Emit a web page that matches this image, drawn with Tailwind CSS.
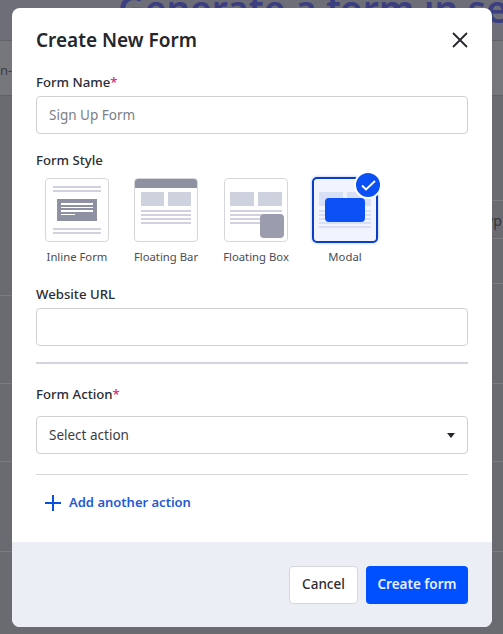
<!DOCTYPE html>
<html lang="en">
<head>
<meta charset="UTF-8">
<title>Create New Form</title>
<script src="https://cdn.jsdelivr.net/npm/@tailwindcss/browser@4"></script>
</head>
<body class="font-['Noto_Sans','Liberation_Sans',sans-serif] text-[#2b2d33]">
<div class="relative w-[503px] h-[634px] overflow-hidden bg-[#6a6b70]">
  <!-- page behind the overlay -->
  <div class="absolute left-0 top-0 w-full h-[40px] bg-[#6e6e78]"></div>
  <div class="absolute left-0 top-[41px] w-full h-[54px] bg-[#76777b]"></div>
  <div class="absolute left-[118px] top-[-19px] whitespace-nowrap text-[37px] font-semibold text-[#3b3e80]">Generate a form in seconds</div>
  <div class="absolute left-0 top-[40px] w-full h-px bg-[#636469]"></div>
  <div class="absolute left-0 top-[95px] w-full h-px bg-[#606166]"></div>
  <div class="absolute left-[492px] top-[200px] w-[11px] h-px bg-[#7b7c80]"></div>
  <div class="absolute left-[492px] top-[238px] w-[11px] h-px bg-[#7b7c80]"></div>
  <div class="absolute left-[492px] top-[283px] w-[11px] h-px bg-[#7b7c80]"></div>
  <div class="absolute left-0 top-[295px] w-[12px] h-px bg-[#7b7c80]"></div>
  <div class="absolute left-0 top-[383px] w-full h-px bg-[#7b7c80]"></div>
  <div class="absolute left-0 top-[461px] w-full h-px bg-[#7b7c80]"></div>
  <div class="absolute left-0 top-[551px] w-full h-px bg-[#7b7c80]"></div>
  <div class="absolute left-0 top-[61px] text-[13px] text-[#3c3d42]">n-</div>
  <div class="absolute left-[486px] top-[210px] text-[14px] text-[#34353a]">yp</div>

  <!-- modal -->
  <div class="absolute left-[12px] top-[8px] w-[480px] h-[619px] bg-white rounded-lg overflow-hidden flex flex-col">
    <div class="flex-1 px-6">
      <div class="flex items-center justify-between pt-[14px] h-[50px]">
        <h2 class="text-[19px] font-semibold leading-7 text-[#24262b]">Create New Form</h2>
        <svg class="w-4 h-4" viewBox="0 0 16 16" fill="none" stroke="#24262b" stroke-width="1.8"><path d="M1 1l14 14M15 1L1 15"/></svg>
      </div>
      <label class="block mt-[14px] text-[13.2px] font-medium leading-5">Form Name<span class="text-[#e0246f]">*</span></label>
      <div class="mt-[4px] h-[38px] border border-[#cfd1d6] rounded flex items-center px-3 text-[13.5px] text-[#7b7e87]">Sign Up Form</div>

      <label class="block mt-[16px] text-[13.2px] font-medium leading-5">Form Style</label>
      <div class="flex mt-[8px] ml-[9px] gap-[25px] items-start">
        <div class="w-[64px] flex flex-col items-center">
          <div class="w-[64px] h-[64px] border border-[#d5d7dc] rounded flex flex-col items-center pt-[7px] px-[7px]">
            <div class="w-full h-[2px] bg-[#d0d3df]"></div>
            <div class="w-full h-[2px] bg-[#d0d3df] mt-[2px]"></div>
            <div class="w-[40px] h-[22px] bg-[#8e91a1] mt-[7px] px-1 pt-[4px] flex flex-col gap-[2px]">
              <div class="h-[1.5px] w-full bg-white"></div>
              <div class="h-[1.5px] w-full bg-white"></div>
              <div class="h-[1.5px] w-full bg-white"></div>
              <div class="h-[1.5px] w-[14px] bg-white"></div>
            </div>
            <div class="w-full h-[2px] bg-[#d0d3df] mt-[7px]"></div>
            <div class="w-full h-[2px] bg-[#d0d3df] mt-[2px]"></div>
          </div>
          <span class="mt-[7px] text-[11.3px] leading-4 whitespace-nowrap text-[#4a4c53]">Inline Form</span>
        </div>
        <div class="w-[64px] flex flex-col items-center">
          <div class="w-[64px] h-[64px] border border-[#d5d7dc] rounded overflow-hidden">
            <div class="h-[9px] bg-[#8e91a1]"></div>
            <div class="flex gap-1 px-[6px] mt-[4px]">
              <div class="w-6 h-[14px] bg-[#ced1de]"></div>
              <div class="w-6 h-[14px] bg-[#ced1de]"></div>
            </div>
            <div class="px-[6px] mt-1 flex flex-col gap-[2px]">
              <div class="h-[2px] bg-[#d0d3df]"></div>
              <div class="h-[2px] bg-[#d0d3df]"></div>
              <div class="h-[2px] bg-[#d0d3df]"></div>
              <div class="h-[2px] bg-[#d0d3df]"></div>
            </div>
          </div>
          <span class="mt-[7px] text-[11.3px] leading-4 whitespace-nowrap text-[#4a4c53]">Floating Bar</span>
        </div>
        <div class="w-[64px] ml-px flex flex-col items-center">
          <div class="relative w-[64px] h-[64px] border border-[#d5d7dc] rounded overflow-hidden">
            <div class="flex gap-1 px-[5px] mt-[13px]">
              <div class="w-6 h-[14px] bg-[#ced1de]"></div>
              <div class="w-6 h-[14px] bg-[#ced1de]"></div>
            </div>
            <div class="px-[5px] mt-1 flex flex-col gap-[2px]">
              <div class="h-[2px] bg-[#d0d3df]"></div>
              <div class="h-[2px] bg-[#d0d3df]"></div>
              <div class="h-[2px] bg-[#d0d3df]"></div>
              <div class="h-[2px] bg-[#d0d3df]"></div>
            </div>
            <div class="absolute right-[3px] bottom-[3px] w-6 h-6 rounded-sm bg-[#9b9dae]"></div>
          </div>
          <span class="mt-[7px] text-[11.3px] leading-4 whitespace-nowrap text-[#4a4c53]">Floating Box</span>
        </div>
        <div class="w-[64px] flex flex-col items-center">
          <div class="relative w-[66px] h-[66px] -mt-[1px] border-2 border-[#0a3fc4] rounded-[5px] bg-[#f1f4fe] shadow-[0_0_3px_rgba(10,80,255,0.4)]">
            <div class="flex gap-1 px-[5px] mt-[13px]">
              <div class="w-6 h-[14px] bg-[#d8e0f8]"></div>
              <div class="w-6 h-[14px] bg-[#d8e0f8]"></div>
            </div>
            <div class="px-[5px] mt-1 flex flex-col gap-[2px]">
              <div class="h-[2px] bg-[#d8e0f8]"></div>
              <div class="h-[2px] bg-[#d8e0f8]"></div>
              <div class="h-[2px] bg-[#d8e0f8]"></div>
              <div class="h-[2px] bg-[#d8e0f8]"></div>
              <div class="h-[2px] bg-[#d8e0f8]"></div>
            </div>
            <div class="absolute left-[11px] top-[19px] w-[40px] h-[24px] rounded-sm bg-[#0a50f5]"></div>
            <div class="absolute right-[-6px] top-[-8px] w-[28px] h-[28px] rounded-full bg-[#0a50f5] border-2 border-white flex items-center justify-center">
              <svg class="w-[15px] h-[12px]" viewBox="0 0 15 12" fill="none" stroke="#fff" stroke-width="1.8"><path d="M1 6.5l4 4L14 2"/></svg>
            </div>
          </div>
          <span class="mt-[6px] text-[11.3px] leading-4 whitespace-nowrap text-[#4a4c53]">Modal</span>
        </div>
      </div>

      <label class="block mt-[19px] text-[13.2px] font-medium leading-5">Website URL</label>
      <div class="mt-[4px] h-[38px] border border-[#cfd1d6] rounded"></div>
      <div class="mt-[16px] h-[2px] bg-[#d2d5e0]"></div>

      <label class="block mt-[20px] text-[13.2px] font-medium leading-5">Form Action<span class="text-[#e0246f]">*</span></label>
      <div class="mt-[12px] h-[38px] border border-[#cfd1d6] rounded flex items-center justify-between pl-3 pr-[12px] text-[13.5px] text-[#3b3d44]">
        <span>Select action</span>
        <svg class="w-[8px] h-[5px]" viewBox="0 0 8 5" fill="#24262b"><path d="M0 0h8L4 5z"/></svg>
      </div>
      <div class="mt-[20px] h-px bg-[#d5d7dc]"></div>
      <div class="mt-[18px] ml-[9px] flex items-center gap-[8px] h-5">
        <svg class="w-4 h-4" viewBox="0 0 16 16" fill="none" stroke="#0a50e0" stroke-width="2"><path d="M8 0v16M0 8h16"/></svg>
        <span class="text-[13px] font-semibold text-[#1f5ad8]">Add another action</span>
      </div>
    </div>
    <div class="h-[85px] bg-[#ebeef5] flex items-center justify-end gap-2 pl-6 pr-6">
      <button class="w-[69px] h-[38px] bg-white border border-[#d5d7dc] rounded text-[13.5px] font-medium">Cancel</button>
      <button class="w-[102px] h-[38px] bg-[#0050ff] rounded text-[13.5px] font-semibold text-[#e8eeff]">Create form</button>
    </div>
  </div>
</div>
</body>
</html>
